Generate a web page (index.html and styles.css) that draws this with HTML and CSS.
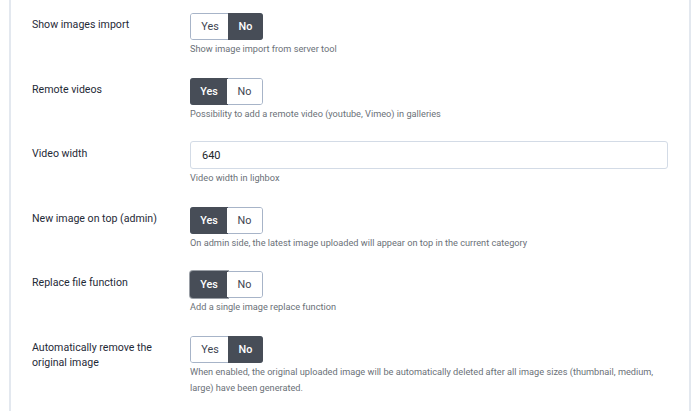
FILE: index.html
```html
<!DOCTYPE html>
<html lang="en">
<head>
    <meta charset="UTF-8">
    <meta name="viewport" content="width=device-width, initial-scale=1.0">
    <title>Gallery Options</title>
    <link rel="stylesheet" href="styles.css">
</head>
<body>
    <div class="options-panel">

        <div class="control-group">
            <div class="control-label">Show images import</div>
            <div class="controls">
                <div class="switcher">
                    <span class="switch-btn">Yes</span>
                    <span class="switch-btn active">No</span>
                </div>
                <div class="help">Show image import from server tool</div>
            </div>
        </div>

        <div class="control-group">
            <div class="control-label">Remote videos</div>
            <div class="controls">
                <div class="switcher">
                    <span class="switch-btn active">Yes</span>
                    <span class="switch-btn">No</span>
                </div>
                <div class="help">Possibility to add a remote video (youtube, Vimeo) in galleries</div>
            </div>
        </div>

        <div class="control-group">
            <div class="control-label">Video width</div>
            <div class="controls">
                <input type="text" class="text-input" value="640">
                <div class="help">Video width in lighbox</div>
            </div>
        </div>

        <div class="control-group">
            <div class="control-label">New image on top (admin)</div>
            <div class="controls">
                <div class="switcher">
                    <span class="switch-btn active">Yes</span>
                    <span class="switch-btn">No</span>
                </div>
                <div class="help">On admin side, the latest image uploaded will appear on top in the current category</div>
            </div>
        </div>

        <div class="control-group">
            <div class="control-label">Replace file function</div>
            <div class="controls">
                <div class="switcher">
                    <span class="switch-btn active focused">Yes</span>
                    <span class="switch-btn">No</span>
                </div>
                <div class="help">Add a single image replace function</div>
            </div>
        </div>

        <div class="control-group">
            <div class="control-label">Automatically remove the original image</div>
            <div class="controls">
                <div class="switcher">
                    <span class="switch-btn">Yes</span>
                    <span class="switch-btn active">No</span>
                </div>
                <div class="help">When enabled, the original uploaded image will be automatically deleted after all image sizes (thumbnail, medium, large) have been generated.</div>
            </div>
        </div>

    </div>
</body>
</html>
```

FILE: styles.css
```css
body {
    font-family: Roboto, "Liberation Sans", Arial, sans-serif;
    background-color: #ffffff;
    margin: 0;
    padding: 0 9px;
    color: #22262a;
}

.options-panel {
    border-left: 2px solid #e3e8ef;
    border-right: 2px solid #e3e8ef;
    padding: 13px 21px 0 21px;
    min-height: 100vh;
    box-sizing: border-box;
}

.control-group {
    display: grid;
    grid-template-columns: 140px 1fr;
    column-gap: 18px;
    margin-bottom: 20.1px;
}

.control-label {
    padding-top: 4px;
    font-size: 10.6px;
    line-height: 15px;
    color: #1f2a37;
}

.switcher {
    display: inline-flex;
    height: 27px;
    border: 1px solid #a7b4c8;
    border-radius: 3px;
    box-sizing: border-box;
}

.switch-btn {
    display: flex;
    align-items: center;
    justify-content: center;
    width: 38px;
    font-size: 10.8px;
    color: #3d4550;
    background-color: #fff;
}

.switch-btn:first-child {
    border-radius: 2px 0 0 2px;
}

.switch-btn:last-child {
    width: 35px;
    border-radius: 0 2px 2px 0;
}

.switch-btn.active {
    background-color: #474d57;
    color: #fff;
    font-weight: 500;
    margin: -1px;
    border-radius: 3px 0 0 3px;
}

.switch-btn.active:last-child {
    border-radius: 0 3px 3px 0;
}

.switch-btn.focused {
    box-shadow: 0 0 0 1px #9a9fa6;
}

.text-input {
    display: block;
    width: 100%;
    height: 28px;
    box-sizing: border-box;
    border: 1px solid #d3dbe6;
    border-radius: 3px;
    padding: 0 11px;
    font-family: inherit;
    font-size: 11px;
    color: #22262a;
    margin-top: -1px;
}

.help {
    margin-top: 1px;
    font-size: 9.2px;
    line-height: 16.5px;
    color: #6b7178;
}
```
